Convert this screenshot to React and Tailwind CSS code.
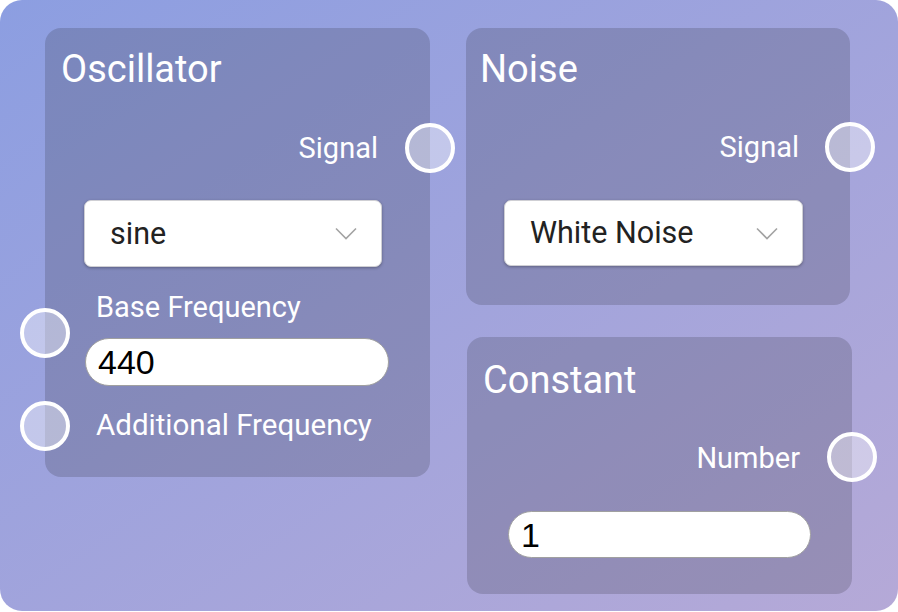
import React from "react";

const Socket = ({ className }) => (
  <div
    className={`absolute w-[50px] h-[50px] rounded-full border-4 border-white bg-white/40 ${className}`}
  />
);

const Chevron = () => (
  <svg width="22" height="13" viewBox="0 0 22 13" fill="none" className="shrink-0">
    <path d="M1 1.5 L11 11.5 L21 1.5" stroke="#a3a3a3" strokeWidth="1.6" />
  </svg>
);

const Select = ({ value, className }) => (
  <div
    className={`flex items-center justify-between bg-white rounded-[7px] border border-[#cfcfd4] shadow-[0_1px_3px_rgba(0,0,0,0.3)] pl-[25px] pr-[24px] text-[30.5px] text-[#222] font-['Roboto',sans-serif] ${className}`}
  >
    <span>{value}</span>
    <Chevron />
  </div>
);

const NumberInput = ({ value, className }) => (
  <div
    className={`flex items-center bg-white rounded-full border border-[#a0a0a0] pl-[12px] text-[34px] leading-none text-black font-['Liberation_Sans',Arial,sans-serif] ${className}`}
  >
    {value}
  </div>
);

const Title = ({ children, className }) => (
  <div className={`h-[40px] flex items-center text-[38px] leading-none text-white ${className}`}>
    {children}
  </div>
);

const Output = ({ label, className }) => (
  <div className={`relative h-[40px] flex items-center justify-end text-[29px] leading-none text-white ${className}`}>
    {label}
  </div>
);

export default function App() {
  return (
    <div className="w-[898px] h-[612px] bg-white">
      <div className="relative w-[898px] h-[611px] rounded-[22px] bg-linear-to-br from-[#8c9ee1] to-[#b5a9d7] overflow-hidden font-['Roboto',sans-serif]">
        {/* Oscillator */}
        <div className="absolute left-[45px] top-[28px] w-[385px] h-[449px] rounded-[16px] bg-[#2a2733]/20 flex flex-col pt-[21px]">
          <Title className="pl-[16px]">Oscillator</Title>
          <Output label="Signal" className="mt-[39px] pr-[52px]" />
          <Select value="sine" className="mt-[32px] ml-[39px] w-[298px] h-[67px]" />
          <div className="mt-[25px] ml-[51px] h-[30px] flex items-center text-[29px] leading-none text-white">
            Base Frequency
          </div>
          <NumberInput value="440" className="mt-[16px] ml-[40px] w-[304px] h-[48px]" />
          <div className="mt-[20px] ml-[51px] h-[40px] flex items-center text-[29.5px] leading-none text-white">
            Additional Frequency
          </div>
          <Socket className="right-[-25px] top-[95px]" />
          <Socket className="left-[-25px] top-[280px]" />
          <Socket className="left-[-25px] top-[373px]" />
        </div>

        {/* Noise */}
        <div className="absolute left-[466px] top-[28px] w-[384px] h-[277px] rounded-[16px] bg-[#2a2733]/20 flex flex-col pt-[21px]">
          <Title className="pl-[14px]">Noise</Title>
          <Output label="Signal" className="mt-[38px] pr-[51px]" />
          <Select value="White Noise" className="mt-[33px] ml-[38px] w-[299px] h-[66px]" />
          <Socket className="right-[-25px] top-[94px]" />
        </div>

        {/* Constant */}
        <div className="absolute left-[467px] top-[337px] w-[385px] h-[257px] rounded-[16px] bg-[#2a2733]/20 flex flex-col pt-[23px]">
          <Title className="pl-[16px]">Constant</Title>
          <Output label="Number" className="mt-[38px] pr-[52px]" />
          <NumberInput value="1" className="mt-[33px] ml-[41px] w-[303px] h-[47px]" />
          <Socket className="right-[-25px] top-[95px]" />
        </div>
      </div>
    </div>
  );
}
